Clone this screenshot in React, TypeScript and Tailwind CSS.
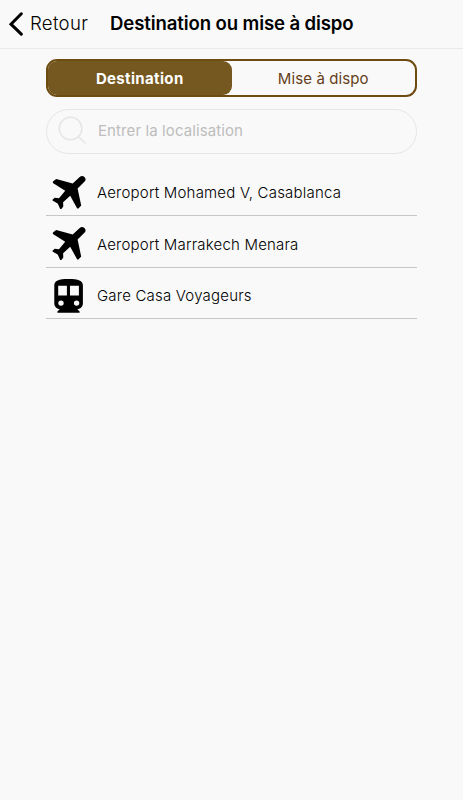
import { useState } from "react";
import clsx from "clsx";

const PlaneIcon = () => (
  <svg className="h-9 w-9 shrink-0" viewBox="0 0 36 36" fill="currentColor">
    <path d="M34.4 2.1a3.3 3.3 0 0 0-4.7 0L22.7 8.4 6.2 4.1 2.9 6.4v1.5L15.2 15.8 9 23.2l-4.3-.4-2.2 1.9v.8l5.2 2.9 2.5 5.6h1.2l1.9-2.4-.2-4.4 7.1-6.4 7 12.7h1.2l2.8-2.9-3.6-17L34.4 6.8a3.3 3.3 0 0 0 0-4.7Z" />
  </svg>
);

const TrainIcon = () => (
  <svg className="h-9 w-9 shrink-0" viewBox="0 0 36 36" fill="currentColor">
    <path
      fillRule="evenodd"
      d="M18.5 1C8.5 1 4.3 2.8 4.3 7.3v17.9c0 3.4 2.2 5.6 5.4 6L7.4 33.6v1.2h22.2v-1.2l-2.3-2.4c3.4-.4 5.6-2.6 5.6-6V7.3C32.9 2.8 28.5 1 18.5 1ZM8.2 7.8h8.7v9.8H8.2V7.8Zm11.8 0h8.9v9.8H20V7.8ZM11 22.4a2.7 2.7 0 1 1 0 5.4 2.7 2.7 0 0 1 0-5.4Zm15.6 0a2.7 2.7 0 1 1 0 5.4 2.7 2.7 0 0 1 0-5.4Z"
    />
  </svg>
);

const places = [
  { name: "Aeroport Mohamed V, Casablanca", icon: PlaneIcon },
  { name: "Aeroport Marrakech Menara", icon: PlaneIcon },
  { name: "Gare Casa Voyageurs", icon: TrainIcon },
];

const tabs = ["Destination", "Mise à dispo"];

export default function App() {
  const [active, setActive] = useState("Destination");

  return (
    <div className="min-h-screen bg-[#f9f9f9] font-[Inter,sans-serif] text-black">
      <header className="flex h-[49px] items-center border-b border-[#e9e9e9] pl-2">
        <button className="flex items-center">
          <svg className="h-6 w-[15px]" viewBox="0 0 15 24" fill="none">
            <path
              d="M13.3 1.8 3 12.2l10.3 10"
              stroke="currentColor"
              strokeWidth="3"
              strokeLinecap="round"
            />
          </svg>
          <span className="ml-[7px] w-[80px] text-left text-[18.6px] font-light tracking-[0.3px]">
            Retour
          </span>
        </button>
        <h1 className="whitespace-nowrap text-[18.6px] font-semibold tracking-[-0.12px]">
          Destination ou mise à dispo
        </h1>
      </header>

      <main className="ml-[46px] w-[371px] pt-[10px]">
        {/* Type de course */}
        <div className="flex h-[38px] rounded-[11px] border-2 border-[#6e4b10] bg-[#f9f9f9]">
          {tabs.map((tab) => (
            <button
              key={tab}
              onClick={() => setActive(tab)}
              className={clsx(
                "flex-1 rounded-[9px] pt-0.5 text-[15px]",
                active === tab
                  ? "bg-[#745820] font-bold tracking-[0.35px] text-white"
                  : "tracking-[0.1px] text-[#65401a]",
              )}
            >
              {tab}
            </button>
          ))}
        </div>

        {/* Recherche */}
        <label className="mt-[11.5px] flex h-[45px] items-center rounded-full border border-[#e6e6e6] pl-[11px]">
          <svg className="h-[30px] w-[30px]" viewBox="0 0 30 30" fill="none">
            <g stroke="#e6e6e6" strokeWidth="1.6">
              <circle cx="12.5" cy="12.5" r="11.3" />
              <path d="m20 20 7.5 7.5" />
            </g>
          </svg>
          <input
            className="ml-[10px] w-[280px] bg-transparent pt-px text-[15px] tracking-[0.1px] outline-none placeholder:text-[#bdbdbd]"
            placeholder="Entrer la localisation"
          />
        </label>

        <ul className="pt-[11px]">
          {places.map(({ name, icon: Icon }) => (
            <li
              key={name}
              className="flex h-[51.5px] items-center border-b border-[#c6c6c6] pl-1 pt-[6px]"
            >
              <Icon />
              <span className="ml-[11px] pt-px text-[15px] font-light tracking-[0.2px]">
                {name}
              </span>
            </li>
          ))}
        </ul>
      </main>
    </div>
  );
}
